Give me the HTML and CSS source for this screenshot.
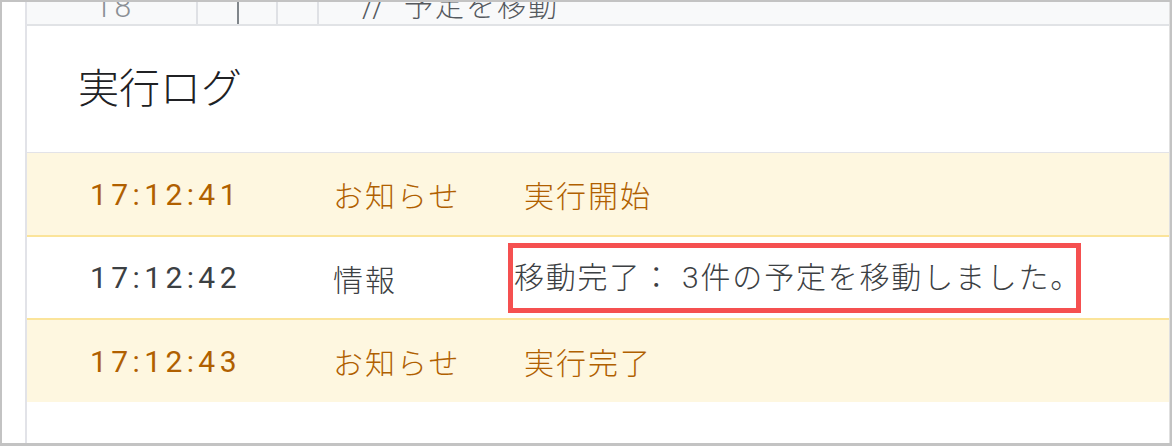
FILE: index.html
```html
<!DOCTYPE html>
<html lang="ja">
<head>
<meta charset="utf-8">
<link rel="stylesheet" href="styles.css">
</head>
<body>
<div class="frame">
  <div class="gutter"></div>
  <div class="main">
    <div class="strip">
      <div class="cell num"><span class="cut">18</span></div>
      <div class="cell narrow"></div>
      <div class="cell narrow dark"></div>
      <div class="cell narrow"></div>
      <div class="cell code"><span class="cut">//  予定を移動</span></div>
    </div>
    <div class="title">実行ログ</div>
    <div class="log">
      <div class="row notice">
        <span class="time">17:12:41</span>
        <span class="level">お知らせ</span>
        <span class="msg">実行開始</span>
      </div>
      <div class="row info">
        <span class="time">17:12:42</span>
        <span class="level">情報</span>
        <span class="msg"><span class="highlight"><span class="hl-text">移動完了： 3件の予定を移動しました。</span></span></span>
      </div>
      <div class="row notice last">
        <span class="time">17:12:43</span>
        <span class="level">お知らせ</span>
        <span class="msg">実行完了</span>
      </div>
    </div>
  </div>
</div>
</body>
</html>
```

FILE: styles.css
```css
* { box-sizing: border-box; }
html, body { margin: 0; padding: 0; background: #ffffff; }
body {
  font-family: Roboto, "Noto Sans CJK JP", sans-serif;
  width: 1172px;
  height: 446px;
  overflow: hidden;
}
.frame {
  width: 1172px;
  height: 446px;
  border: 2px solid #c3c3c3;
  border-bottom-width: 3px;
  display: flex;
  background: #ffffff;
}
.gutter {
  width: 25px;
  flex: none;
  border-right: 2px solid #e2e3e8;
}
.main {
  flex: 1;
  display: flex;
  flex-direction: column;
  border-right: 1px solid #e0e0e0;
  overflow: hidden;
}
.strip {
  height: 24px;
  flex: none;
  display: flex;
  background: #f8f9fa;
  border-bottom: 2px solid #e1e3e6;
  overflow: hidden;
}
.cell {
  display: flex;
  align-items: flex-end;
  justify-content: center;
  padding-bottom: 2px;
  border-right: 2px solid #dfe1e5;
}
.cell.num { width: 171px; color: #8a8f95; padding-left: 6px; }
.cell.narrow { width: 41px; }
.cell:nth-child(2) { border-right: 2px solid #80868b; }
.cell.dark { width: 39px; }
.cell.code {
  flex: 1;
  border-right: none;
  justify-content: flex-start;
  padding-left: 43px;
  color: #55595e;
}
.cut {
  font-size: 30px;
  line-height: 30px;
  font-weight: 300;
  letter-spacing: 3px;
  white-space: pre;
}
.cell.code .cut { font-size: 29px; letter-spacing: 2px; }
.title {
  height: 127px;
  flex: none;
  padding-left: 51px;
  padding-top: 34px;
  font-family: "Noto Sans CJK JP", sans-serif;
  font-weight: 300;
  font-size: 41px;
  line-height: 50px;
  color: #202124;
  border-bottom: 1px solid #e3e3e8;
}
.log { display: flex; flex-direction: column; }
.row {
  height: 84px;
  display: grid;
  grid-template-columns: 243px 191px 1fr;
  align-items: center;
  padding-left: 63px;
  font-size: 30px;
  letter-spacing: 2px;
  border-bottom: 2px solid #fbe49a;
}
.row.notice { background: #fef7e0; color: #b06000; }
.row.info { background: #ffffff; color: #3c4043; height: 83px; }
.row.last { height: 82px; border-bottom: none; }
.time { letter-spacing: 4.4px; }
.level, .msg {
  font-family: "Noto Sans CJK JP", Roboto, sans-serif;
  font-weight: 300;
}
.highlight {
  display: inline-block;
  margin-left: -16px;
  border: 5px solid #f55050;
  padding: 10px 2px 10px 1px;
  line-height: 40px;
  letter-spacing: 1.8px;
  white-space: nowrap;
  font-family: Roboto, "Noto Sans CJK JP", sans-serif;
}
.hl-text { display: inline-block; margin-right: -8px; }
```
